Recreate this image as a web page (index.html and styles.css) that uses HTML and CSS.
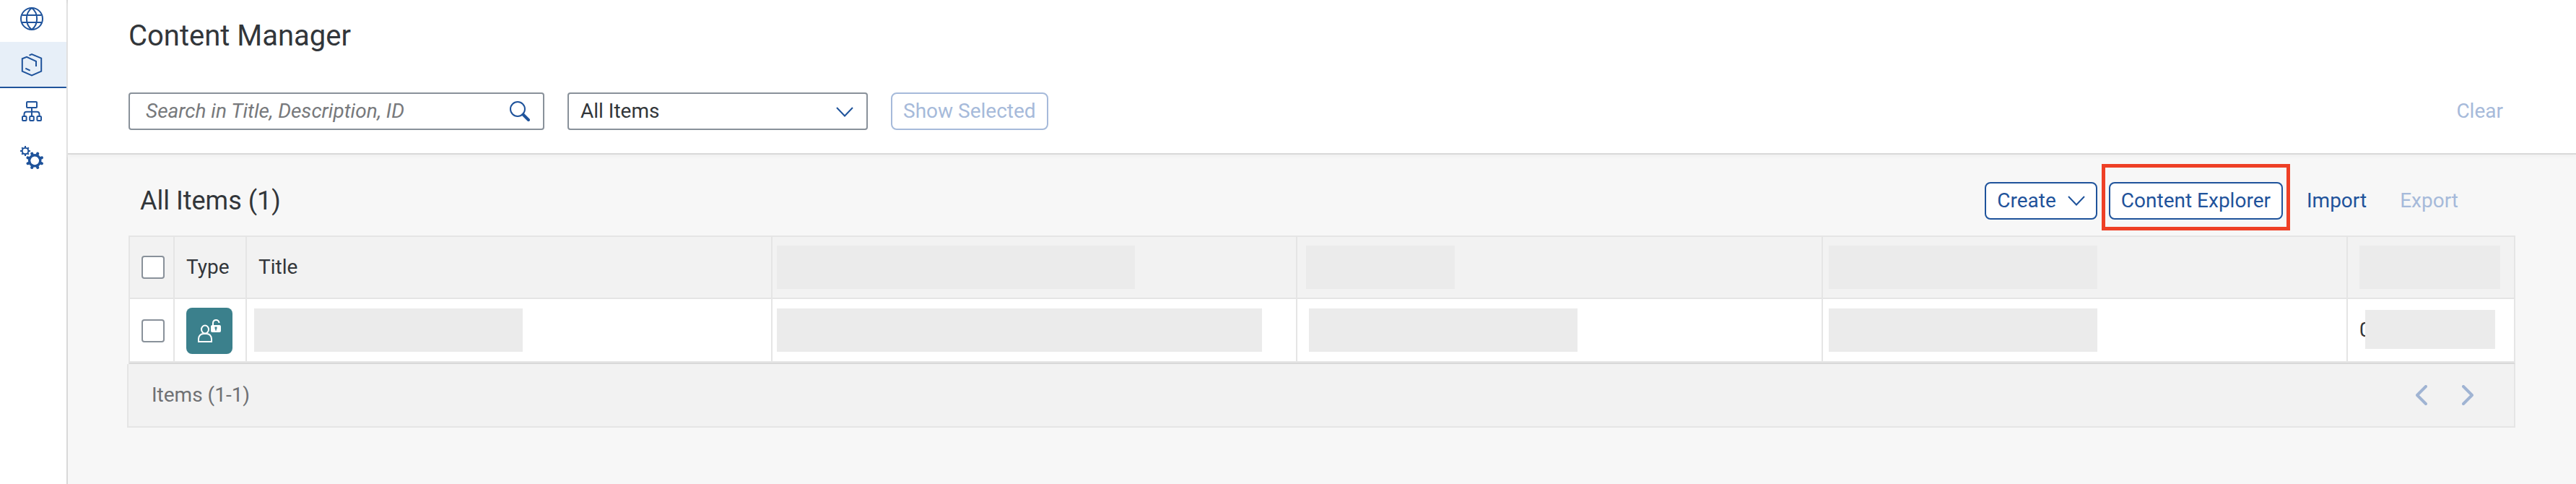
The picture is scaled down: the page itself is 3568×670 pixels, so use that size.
FILE: index.html
```html
<!DOCTYPE html>
<html lang="en">
<head>
<meta charset="utf-8">
<title>Content Manager</title>
<meta name="viewport" content="width=device-width, initial-scale=1">
<link rel="stylesheet" href="styles.css">
</head>
<body>
<div class="app">
  <nav class="sidebar" aria-label="Main">
    <a class="nav-item" href="#channels" aria-label="Channels">
      <svg class="icon" viewBox="0 0 32 32"><circle cx="16" cy="16" r="15"/><path d="M16 1C6.500 8 6.500 24 16 31C25.500 24 25.500 8 16 1zM2.500 11h27M2.500 21h27"/></svg>
    </a>
    <a class="nav-item nav-item-active" href="#content" aria-label="Content Manager" aria-current="page">
      <svg class="icon" viewBox="0 0 32 32"><path d="M12.500 2.700L16 1.100L29.200 6.700V24.700L16 30.500L2.800 24.700V7.200L9 4.800L22 10.800V18M7.300 20.700L13.700 23.700"/></svg>
    </a>
    <a class="nav-item" href="#sites" aria-label="Site Directory">
      <svg class="icon" viewBox="0 0 32 32"><rect x="9" y="3" width="14" height="8" rx="1"/><path d="M16 11v11M5.500 22v-2q0-3.300 3.300-3.300h14.400q3.300 0 3.300 3.300v2"/><rect x="3" y="23" width="5.600" height="6" rx="1"/><rect x="13.200" y="23" width="5.600" height="6" rx="1"/><rect x="23.400" y="23" width="5.600" height="6" rx="1"/></svg>
    </a>
    <a class="nav-item" href="#settings" aria-label="Settings">
      <svg class="icon" viewBox="0 0 32 32">
        <g transform="translate(7 7)"><circle r="4.300"/><path d="M4 0H7M-4 0H-7M0 4V7M0-4V-7M3-3L4.800-4.800M-3-3L-4.800-4.800M3 3L4.800 4.800M-3 3L-4.800 4.800"/></g>
        <g transform="translate(20.200 20.300)"><circle r="7.600" stroke-width="3.400"/><path class="icon-teeth" d="M7.400 3.100L9.700 4M7.400-3.100L9.700-4M-7.400 3.100L-9.700 4M-7.400-3.100L-9.700-4M3.100 7.400L4 9.700M3.100-7.400L4-9.700M-3.100 7.400L-4 9.700M-3.100-7.400L-4-9.700"/></g>
      </svg>
    </a>
  </nav>
  <main class="main">
    <header class="page-header">
      <h1 class="page-title">Content Manager</h1>
      <form class="filters">
        <div class="search">
          <input class="search-input" type="search" placeholder="Search in Title, Description, ID" aria-label="Search in Title, Description, ID">
          <button class="search-button" type="button" aria-label="Search"><svg class="search-icon" viewBox="0 0 28 28"><ellipse cx="11" cy="11" rx="10" ry="10"/><path class="search-handle" d="M18.500 18.500L26 26"/></svg></button>
        </div>
        <div class="select-box">
          <select class="select" aria-label="Item type"><option>All Items</option></select>
          <svg class="chevron select-chevron" viewBox="0 0 24 14"><path d="M1 1L12 12.500L23 1"/></svg>
        </div>
        <button class="button" type="button" disabled>Show Selected</button>
        <button class="button button-plain filters-clear" type="button" disabled>Clear</button>
      </form>
    </header>
    <section class="content">
      <div class="toolbar">
        <h2 class="toolbar-title">All Items (1)</h2>
        <button class="button" type="button">Create <svg class="chevron" viewBox="0 0 24 14"><path d="M1 1L12 12.500L23 1"/></svg></button>
        <div class="highlight"><button class="button" type="button">Content Explorer</button></div>
        <div class="transfer">
          <button class="button button-plain" type="button">Import</button>
          <button class="button button-plain" type="button" disabled>Export</button>
        </div>
      </div>
      <table class="items">
        <colgroup><col class="col-check"><col class="col-type"><col><col><col><col><col class="col-last"></colgroup>
        <thead>
          <tr>
            <th class="cell-check"><input class="checkbox" type="checkbox" aria-label="Select all items"></th>
            <th>Type</th>
            <th>Title</th>
            <th class="cell-tight"><div class="mask mask-wide"></div></th>
            <th class="cell-medium"><div class="mask mask-short"></div></th>
            <th class="cell-narrow"><div class="mask"></div></th>
            <th><div class="mask mask-last"></div></th>
          </tr>
        </thead>
        <tbody>
          <tr>
            <td class="cell-control"><input class="checkbox" type="checkbox" aria-label="Select item"></td>
            <td class="cell-control"><span class="type-badge"><svg class="type-icon" viewBox="0 0 32 32"><ellipse cx="10" cy="14" rx="5" ry="5.500"/><path d="M1 31v-3.500c0-4.500 3-7.500 7-7.500h4c4 0 7 3 7 7.500V31zM21 9V5.500c0-6 8.500-6 8.500-0.500"/><rect class="lock-body" x="18" y="8" width="14" height="10" rx="2"/><path class="lock-hole" d="M23.500 10.500h3v2.500h-0.700v2.500h-1.600v-2.500h-0.700z"/></svg></span></td>
            <td class="cell-title"><div class="mask"></div></td>
            <td class="cell-tight"><div class="mask mask-full"></div></td>
            <td><div class="mask"></div></td>
            <td class="cell-narrow"><div class="mask"></div></td>
            <td><div class="covered">0<div class="mask mask-cover"></div></div></td>
          </tr>
        </tbody>
      </table>
      <footer class="pager">
        <span>Items (1-1)</span>
        <div class="pager-buttons">
          <button class="pager-button" type="button" aria-label="Previous page" disabled><svg class="pager-icon" viewBox="0 0 16 28"><path d="M14 2L2 14L14 26"/></svg></button>
          <button class="pager-button" type="button" aria-label="Next page" disabled><svg class="pager-icon" viewBox="0 0 16 28"><path d="M2 2L14 14L2 26"/></svg></button>
        </div>
      </footer>
    </section>
  </main>
</div>
</body>
</html>
```

FILE: styles.css
```css
:root {
  --blue: #1f539b;
  --blue-disabled: #a6bada;
  --text: #32363a;
  --muted: #6f7174;
  --field: #89919a;
  --line: #e5e5e5;
  --line-dark: #d9d9d9;
}

* { box-sizing: border-box; }

body {
  margin: 0;
  background: #f7f7f7;
  color: var(--text);
  font: 28px/32px Roboto, "Liberation Sans", sans-serif;
}

button, input, select { margin: 0; font: inherit; color: inherit; }

svg {
  display: block;
  flex: none;
  fill: none;
  stroke: currentColor;
  stroke-width: 2;
}

.app {
  display: grid;
  grid-template-columns: 94px minmax(0, 1fr);
  min-height: 100vh;
}

.sidebar {
  background: #fff;
  border-right: 2px solid var(--line-dark);
  overflow: hidden;
}

.nav-item {
  display: flex;
  justify-content: center;
  padding: 16px 4px 14px 0;
  border-bottom: 2px solid transparent;
  color: var(--blue);
}
.nav-item:first-child { margin-top: -6px; }
.nav-item-active { background: #e7eff8; border-bottom-color: var(--blue); }

.icon { width: 32px; height: 32px; }
.icon-teeth { stroke-width: 4; stroke-linecap: round; }

.page-header {
  padding: 26px 84px 32px;
  background: #fff;
  border-bottom: 2px solid var(--line-dark);
  box-shadow: 0 4px 4px #f2f2f2;
}
.page-title { margin: 0 0 54px; font-size: 40px; line-height: 48px; font-weight: 400; }

.filters { display: flex; align-items: center; gap: 32px; }
.filters-clear { margin-left: auto; }

.search {
  display: flex;
  width: 576px;
  height: 52px;
  border: 2px solid var(--field);
  border-radius: 4px;
}
.search-input {
  flex: 1;
  min-width: 0;
  padding: 0 0 0 22px;
  border: 0;
  background: none;
  outline: 0;
}
.search-input::placeholder { color: #77797c; font-style: italic; opacity: 1; }
.search-button {
  display: flex;
  align-items: center;
  padding: 0 18px;
  border: 0;
  background: none;
  color: var(--blue);
}
.search-icon { width: 28px; height: 28px; }
.search-handle { stroke-width: 4; stroke-linecap: round; }

.select-box { position: relative; width: 416px; height: 52px; }
.select {
  appearance: none;
  width: 100%;
  height: 100%;
  padding: 0 56px 0 16px;
  border: 2px solid var(--field);
  border-radius: 4px;
  background: #fff;
}
.select-chevron { position: absolute; top: 20px; right: 20px; pointer-events: none; }

.chevron { width: 24px; height: 14px; color: var(--blue); }

.button {
  display: flex;
  align-items: center;
  gap: 16px;
  height: 52px;
  padding: 0 15px;
  border: 2px solid var(--blue);
  border-radius: 8px;
  background: #fff;
  color: var(--blue);
  white-space: nowrap;
}
.button:disabled { border-color: var(--blue-disabled); color: var(--blue-disabled); }
.button-plain, .button-plain:disabled { border-color: transparent; background: none; }

.content { padding: 38px 84px 78px; }

.toolbar {
  display: flex;
  align-items: center;
  gap: 16px;
  padding: 0 62px 0 16px;
  margin-bottom: 22px;
}
.toolbar-title { margin: 0 auto 0 0; font-size: 36px; line-height: 44px; font-weight: 400; }
.transfer { display: flex; gap: 12px; }

.highlight { position: relative; }
.highlight::after {
  content: "";
  position: absolute;
  inset: -25px -10px -15px;
  border: 5px solid #ee4026;
  pointer-events: none;
}

.items {
  width: 100%;
  table-layout: fixed;
  border-collapse: separate;
  border-spacing: 0;
  border: 2px solid var(--line);
  border-bottom-color: var(--line-dark);
  background: #fff;
}
.items th, .items td {
  height: 88px;
  padding: 0 0 0 16px;
  border-right: 2px solid var(--line);
  border-bottom: 2px solid var(--line);
  text-align: left;
  font-weight: 400;
  vertical-align: middle;
}
.items th { height: 86px; background: #f2f2f2; }
.items th:last-child, .items td:last-child { border-right: 0; }
.items .cell-control { padding-top: 2px; }
.items .cell-title { padding-left: 10px; }
.items .cell-tight { padding-left: 6px; }
.items .cell-narrow { padding-left: 8px; }
.items .cell-medium { padding-left: 12px; }
.col-check { width: 62px; }
.col-type { width: 100px; }
.col-last { width: 230px; }

.checkbox {
  appearance: none;
  display: block;
  width: 32px;
  height: 32px;
  border: 2px solid var(--field);
  border-radius: 4px;
  background: #fff;
}

.type-badge {
  display: flex;
  align-items: center;
  justify-content: center;
  width: 64px;
  height: 64px;
  border-radius: 8px;
  background: #3b808c;
  color: #fff;
}
.type-icon { width: 32px; height: 32px; }
.lock-body { fill: currentColor; stroke: none; }
.lock-hole { fill: #3b808c; stroke: none; }

.mask { width: 372px; height: 60px; background: #ebebeb; }
.mask-wide { width: 496px; }
.mask-short { width: 206px; }
.mask-full { width: 672px; }
.mask-last { width: 195px; }

.covered { position: relative; }
.mask-cover { position: absolute; top: -12px; left: 8px; width: 180px; height: 54px; }

.pager {
  display: flex;
  align-items: center;
  justify-content: space-between;
  height: 88px;
  margin-left: -2px;
  padding: 0 32px;
  border: 2px solid var(--line);
  border-top: 0;
  background: #f2f2f2;
  color: var(--muted);
}
.pager-buttons { display: flex; }
.pager-button {
  display: flex;
  align-items: center;
  justify-content: center;
  width: 64px;
  height: 64px;
  padding: 0;
  border: 0;
  background: none;
  color: #a0b4d3;
}
.pager-icon { width: 16px; height: 28px; stroke-width: 4; stroke-linecap: round; stroke-linejoin: round; }
```
